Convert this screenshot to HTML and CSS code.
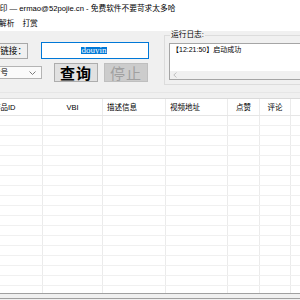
FILE: index.html
```html
<!DOCTYPE html>
<html lang="zh-CN">
  <head>
    <meta charset="UTF-8" />
    <title>去水印</title>
    <link rel="stylesheet" href="styles.css">
  </head>
  <body>
    <div class="window">
      <div class="titlebar">
        <span class="title">水印 — ermao@52pojie.cn - 免费软件不要苛求太多哈</span>
      </div>
      <div class="menubar">
        <span class="menu first">解析</span>
        <span class="menu">打赏</span>
      </div>

      <div class="panel">
        <div class="controls">
          <div class="row">
            <div class="label">链接：</div>
            <div class="input"><span class="selected">douyin</span></div>
          </div>
          <div class="row">
            <div class="select">
              <span>抖音号</span>
              <svg width="7" height="4" viewBox="0 0 7 4"><polyline points="0.5,0.5 3.5,3.5 6.5,0.5" fill="none" stroke="#7a7a7a" stroke-width="1"/></svg>
            </div>
            <button class="btn">查询</button>
            <button class="btn" disabled>停止</button>
          </div>
        </div>

        <fieldset class="logbox">
          <legend>运行日志:</legend>
          <div class="log">
            <div class="log-line">【12:21:50】启动成功</div>
            <div class="hscroll">
              <svg width="4" height="6" viewBox="0 0 4 6"><polyline points="3.5,0.5 0.8,3 3.5,5.5" fill="none" stroke="#c0c0c0" stroke-width="1"/></svg>
            </div>
          </div>
        </fieldset>
      </div>

      <div class="grid">
        <div class="head">
          <div class="cell">作品ID</div>
          <div class="cell center">VBI</div>
          <div class="cell">描述信息</div>
          <div class="cell">视频地址</div>
          <div class="cell center">点赞</div>
          <div class="cell center">评论</div>
          <div class="cell center">分享</div>
        </div>
        <div id="rows"></div>
      </div>
      <div class="status"></div>
    </div>

    <script>
      const rows = document.getElementById("rows");
      for (let i = 0; i < 18; i++) {
        const row = document.createElement("div");
        row.className = "line";
        for (let c = 0; c < 7; c++) {
          const cell = document.createElement("div");
          cell.className = "cell";
          row.appendChild(cell);
        }
        rows.appendChild(row);
      }
    </script>
  </body>
</html>
```

FILE: styles.css
```css
body {
  margin: 0;
  font-family: "Liberation Sans", "Noto Sans CJK SC", sans-serif;
  background: #f0f0f0;
  overflow: hidden;
}
.window {
  width: 300px;
  height: 300px;
  overflow: hidden;
}
.titlebar {
  height: 17px;
  background: #fff;
  font-size: 7.7px;
  line-height: 17px;
  white-space: nowrap;
  color: #000;
}
.title {
  margin-left: -8px;
}
.menubar {
  height: 14px;
  background: #fff;
  font-size: 7.7px;
  line-height: 14px;
  display: flex;
  gap: 8px;
}
.menu.first {
  margin-left: -1px;
}
.panel {
  height: 61px;
  display: flex;
  align-items: flex-start;
  border-bottom: 1px solid #e6e6e6;
  margin-bottom: 5px;
}
.controls {
  flex: none;
  width: 170px;
  margin-left: -20px;
  padding-top: 11px;
  display: flex;
  flex-direction: column;
  gap: 4px;
}
.row {
  display: flex;
  align-items: center;
}
.label {
  flex: none;
  width: 45px;
  height: 14px;
  border: 1px solid #a8a8a8;
  font-size: 8.6px;
  line-height: 14px;
  text-align: right;
  padding-right: 1px;
  margin-right: 13px;
  white-space: nowrap;
  overflow: hidden;
}
.input {
  flex: none;
  width: 106px;
  height: 15px;
  border: 1px solid #0078d7;
  background: #fff;
  display: flex;
  align-items: center;
  justify-content: center;
}
.selected {
  display: inline-block;
  height: 7px;
  line-height: 7px;
  font-family: "Liberation Serif", serif;
  font-size: 9px;
  background: #0078d7;
  color: #fff;
  margin-left: -2px;
}
.select {
  flex: none;
  width: 55px;
  height: 11px;
  border: 1px solid #b4b4b4;
  background: #fafafa;
  display: flex;
  align-items: center;
  justify-content: space-between;
  font-size: 7.7px;
  line-height: 11px;
  padding-right: 5px;
  margin-right: 12px;
  white-space: nowrap;
}
.select span {
  margin-left: 4px;
}
.btn {
  flex: none;
  width: 44px;
  height: 19px;
  padding: 0;
  margin: 0 6px 0 0;
  border: 1px solid #adadad;
  background: #e1e1e1;
  font-family: "Noto Sans CJK SC", sans-serif;
  font-weight: bold;
  font-size: 15px;
  line-height: 17px;
  color: #000;
  letter-spacing: 1px;
}
.btn:disabled {
  background: #cccccc;
  border-color: #bfbfbf;
  color: #a0a0a0;
  font-weight: normal;
}
.logbox {
  flex: 1;
  margin: 0 -20px 0 14px;
  padding: 4px 4px 4px 4px;
  border: 1px solid #dcdcdc;
  min-width: 0;
}
.logbox legend {
  font-size: 7.7px;
  line-height: 8px;
  padding: 0 1px;
  margin-left: 1px;
}
.log {
  height: 35px;
  border: 1px solid #a5a5a5;
  background: #fff;
  display: flex;
  flex-direction: column;
  justify-content: space-between;
}
.log-line {
  font-size: 7px;
  line-height: 9px;
  padding: 1px 0 0 2px;
  white-space: nowrap;
}
.hscroll {
  height: 8px;
  background: #f0f0f0;
  display: flex;
  align-items: center;
  padding-left: 3px;
}
.grid {
  height: 194px;
  border-top: 1px solid #dadada;
  background: #fff;
  margin-left: -10px;
  overflow: hidden;
}
.head,
.line {
  display: grid;
  grid-template-columns: 53px 60px 63px 62px 32px 31px 40px;
}
.head {
  height: 16px;
  border-bottom: 1px solid #e6e6e6;
  font-size: 7.5px;
  line-height: 17px;
  white-space: nowrap;
}
.line {
  height: 9px;
  border-bottom: 1px solid #f0f0f0;
}
.cell {
  border-right: 1px solid #ebebeb;
  padding-left: 3px;
  overflow: hidden;
}
.head .cell:nth-child(3),
.head .cell:nth-child(4) {
  padding-left: 4px;
}
.center {
  text-align: center;
  padding-left: 0;
}
.status {
  height: 4px;
  border-top: 1px solid #a0a0a0;
  border-bottom: 1px solid #a0a0a0;
  background: #f0f0f0;
}
```
